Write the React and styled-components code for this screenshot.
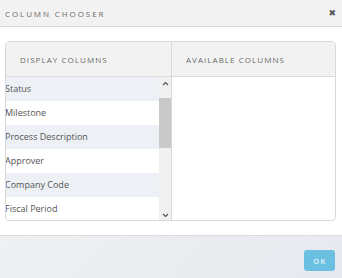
import styled, { createGlobalStyle } from 'styled-components';

const GlobalStyle = createGlobalStyle`
    body {
        margin: 0;
        font-family: 'Open Sans', 'Liberation Sans', sans-serif;
        background: #ffffff;
    }
`;

const displayColumns = ['Status', 'Milestone', 'Process Description', 'Approver', 'Company Code', 'Fiscal Period'];

export default function App() {
    return (
        <Dialog>
            <GlobalStyle />
            <Header>
                <Title>COLUMN CHOOSER</Title>
                <Close>✖</Close>
            </Header>
            <Body>
                <Panel>
                    <Column>
                        <ColumnHead>DISPLAY COLUMNS</ColumnHead>
                        <ListArea>
                            <List>
                                {displayColumns.map((name, i) => (
                                    <Row key={name} striped={i % 2 === 0}>{name}</Row>
                                ))}
                            </List>
                            <Scrollbar>
                                <Arrow>
                                    <svg width="7" height="5" viewBox="0 0 7 5"><path d="M1 4 L3.5 1.5 L6 4" stroke="#555" strokeWidth="1.2" fill="none" /></svg>
                                </Arrow>
                                <Track>
                                    <Thumb />
                                </Track>
                                <Arrow>
                                    <svg width="7" height="5" viewBox="0 0 7 5"><path d="M1 1 L3.5 3.5 L6 1" stroke="#555" strokeWidth="1.2" fill="none" /></svg>
                                </Arrow>
                            </Scrollbar>
                        </ListArea>
                    </Column>
                    <Column divided>
                        <ColumnHead>AVAILABLE COLUMNS</ColumnHead>
                    </Column>
                </Panel>
            </Body>
            <Footer>
                <OkButton>OK</OkButton>
            </Footer>
        </Dialog>
    );
}

const Dialog = styled.div`
    width: 342px;
    height: 278px;
    display: flex;
    flex-direction: column;
    background: #ffffff;
`;

const Header = styled.div`
    height: 26px;
    display: flex;
    align-items: center;
    justify-content: space-between;
    padding: 0 6px 0 5px;
    background: #f2f2f2;
    border-bottom: 1px solid #d8d8d8;
`;

const Title = styled.span`
    font-size: 8px;
    letter-spacing: 1.9px;
    color: #6a6a6a;
`;

const Close = styled.span`
    font-size: 9px;
    color: #555;
    font-family: 'DejaVu Sans', sans-serif;
`;

const Body = styled.div`
    height: 208px;
    padding: 14px 6px 0 5px;
    box-sizing: border-box;
`;

const Panel = styled.div`
    height: 180px;
    display: flex;
    border: 1px solid #d9d9d9;
    border-radius: 4px;
    overflow: hidden;
    box-sizing: border-box;
`;

const Column = styled.div`
    flex: ${p => (p.divided ? '1' : '0 0 165px')};
    display: flex;
    flex-direction: column;
    border-left: ${p => (p.divided ? '1px solid #d9d9d9' : 'none')};
`;

const ColumnHead = styled.div`
    height: 34px;
    flex-shrink: 0;
    display: flex;
    align-items: center;
    padding-left: 14px;
    font-size: 8px;
    letter-spacing: 1.05px;
    color: #6a6a6a;
    background: #f2f2f2;
    border-bottom: 1px solid #d9d9d9;
`;

const ListArea = styled.div`
    flex: 1;
    display: flex;
`;

const List = styled.div`
    flex: 1;
    display: flex;
    flex-direction: column;
`;

const Row = styled.div`
    height: 24px;
    display: flex;
    align-items: center;
    padding-bottom: 1px;
    box-sizing: border-box;
    font-size: 9px;
    color: #555;
    background: ${p => (p.striped ? '#edf0f4' : '#ffffff')};
    margin-left: -1px;
`;

const Scrollbar = styled.div`
    width: 12px;
    display: flex;
    flex-direction: column;
    background: #f1f1f1;
`;

const Arrow = styled.div`
    height: 12px;
    display: flex;
    align-items: center;
    justify-content: center;
`;

const Track = styled.div`
    flex: 1;
    padding-top: 9px;
`;

const Thumb = styled.div`
    height: 50px;
    background: #c9c9c9;
`;

const Footer = styled.div`
    flex: 1;
    display: flex;
    align-items: flex-start;
    justify-content: flex-end;
    padding: 14px 7px 0 0;
    background: linear-gradient(135deg, #eef0f2, #e6e9ee);
    border-top: 1px solid #dcdcdc;
`;

const OkButton = styled.button`
    width: 31px;
    height: 21px;
    border: none;
    border-radius: 3px;
    background: #6bbfe0;
    color: #e8f5fb;
    font-family: 'Open Sans', sans-serif;
    font-size: 7.5px;
    font-weight: 600;
    letter-spacing: 1.3px;
    padding: 0 0 0 1px;
`;
